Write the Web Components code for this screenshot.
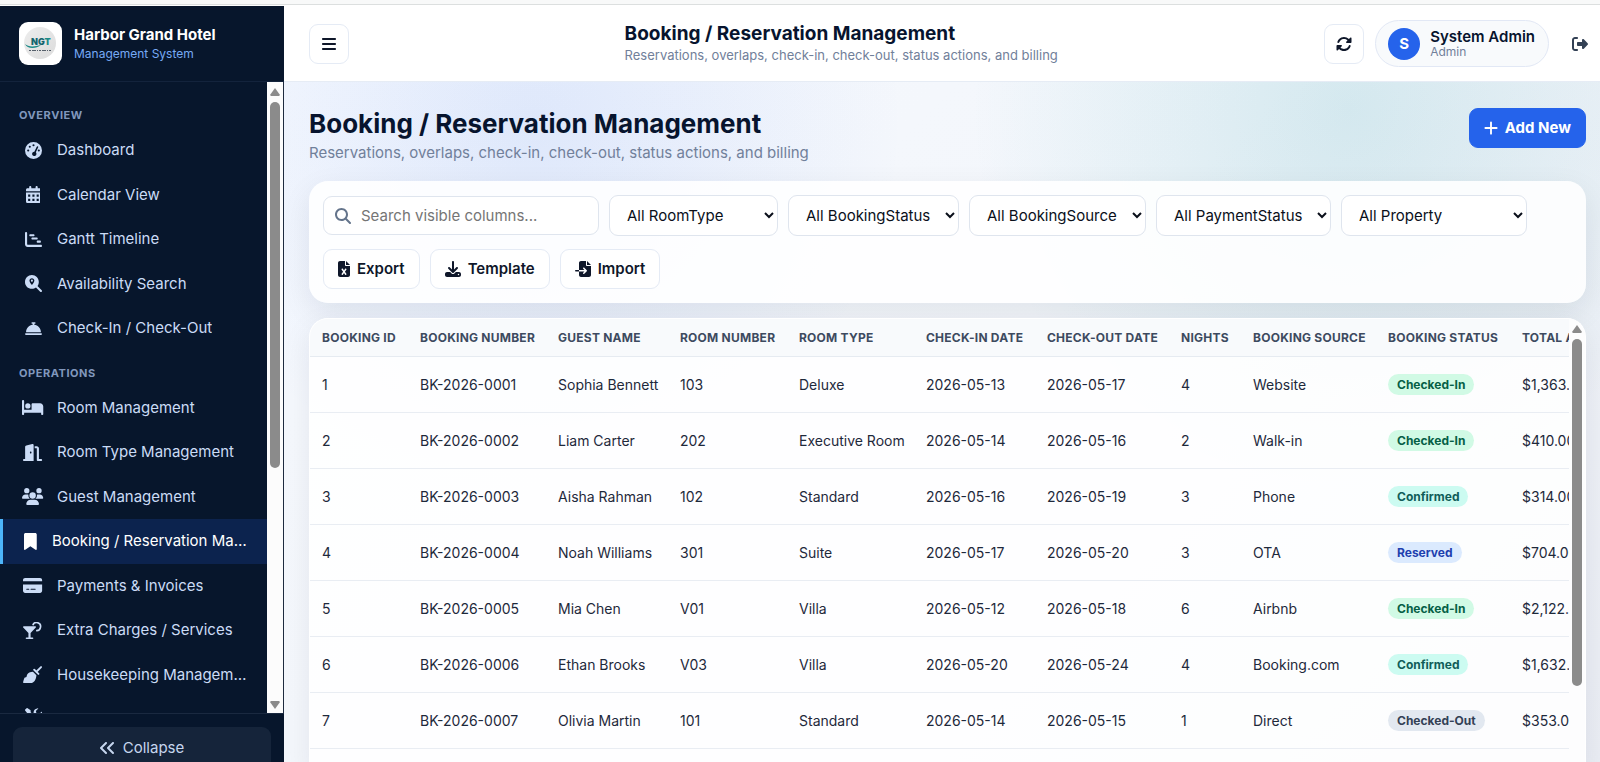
<!DOCTYPE html>
<html lang="en">
<head>
<meta charset="utf-8">
<meta name="viewport" content="width=device-width, initial-scale=1">
<title>Booking / Reservation Management</title>
<style>
  html, body { margin: 0; height: 100%; }
  body { font-family: Inter, "Liberation Sans", sans-serif; font-size: 15px; color: #07142e; overflow: hidden; }
</style>
</head>
<body>
<hotel-app></hotel-app>

<script>
const ICONS = {
  bars: ['0 0 448 512', '<path d="M0 96C0 78.3 14.3 64 32 64H416c17.7 0 32 14.3 32 32s-14.3 32-32 32H32C14.3 128 0 113.7 0 96zM0 256c0-17.7 14.3-32 32-32H416c17.7 0 32 14.3 32 32s-14.3 32-32 32H32c-17.7 0-32-14.3-32-32zM448 416c0 17.7-14.3 32-32 32H32c-17.7 0-32-14.3-32-32s14.3-32 32-32H416c17.7 0 32 14.3 32 32z"/>'],
  rotate: ['0 0 512 512', '<path d="M142.9 142.9c62.2-62.2 162.7-62.5 225.3-1L327 183c-6.9 6.9-8.9 17.2-5.2 26.2s12.5 14.8 22.2 14.8H472c13.3 0 24-10.7 24-24V72c0-9.7-5.8-18.5-14.8-22.2s-19.3-1.7-26.2 5.2L413.4 96.6c-87.6-86.5-228.7-86.2-315.8 1C73.2 122 55.6 150.7 44.8 181.4c-5.9 16.7 2.9 34.9 19.5 40.8s34.9-2.9 40.8-19.5c7.7-21.8 20.2-42.3 37.8-59.8zM16 312V440c0 9.7 5.8 18.5 14.8 22.2s19.3 1.7 26.2-5.2l41.6-41.6c87.6 86.5 228.7 86.2 315.8-1c24.4-24.4 42.1-53.1 52.9-83.7c5.9-16.7-2.9-34.9-19.5-40.8s-34.9 2.9-40.8 19.5c-7.7 21.8-20.2 42.3-37.8 59.8c-62.2 62.2-162.7 62.5-225.3 1L185 329c6.9-6.9 8.9-17.2 5.2-26.2s-12.5-14.8-22.2-14.8H40c-13.3 0-24 10.7-24 24z"/>'],
  logout: ['0 0 512 512', '<path d="M377.9 105.9L500.7 228.7c7.2 7.2 11.3 17.1 11.3 27.3s-4.1 20.1-11.3 27.3L377.9 406.1c-6.4 6.4-15 9.9-24 9.9c-18.7 0-33.9-15.2-33.9-33.9V320H192c-17.7 0-32-14.3-32-32V224c0-17.7 14.3-32 32-32H320V129.9c0-18.7 15.2-33.9 33.9-33.9c9 0 17.6 3.6 24 9.9zM160 96H96c-17.7 0-32 14.3-32 32V384c0 17.7 14.3 32 32 32h64c17.7 0 32 14.3 32 32s-14.3 32-32 32H96c-53 0-96-43-96-96V128C0 75 43 32 96 32h64c17.7 0 32 14.3 32 32s-14.3 32-32 32z"/>'],
  plus: ['0 0 448 512', '<path d="M224 76V436M44 256H404" fill="none" stroke="currentColor" stroke-width="60" stroke-linecap="round"/>'],
  search: ['0 0 512 512', '<path d="M416 208c0 45.9-14.9 88.3-40 122.7L502.6 457.4c12.5 12.5 12.5 32.8 0 45.3s-32.8 12.5-45.3 0L330.7 376c-34.4 25.2-76.8 40-122.7 40C93.1 416 0 322.9 0 208S93.1 0 208 0S416 93.1 416 208zM208 352a144 144 0 1 0 0-288 144 144 0 1 0 0 288z"/>'],
  gauge: ['0 0 512 512', '<path fill-rule="evenodd" d="M0 256a256 256 0 1 1 512 0A256 256 0 1 1 0 256zM256 128a32 32 0 1 0 0-64 32 32 0 1 0 0 64zM144 176a32 32 0 1 0 0-64 32 32 0 1 0 0 64zM96 288a32 32 0 1 0 0-64 32 32 0 1 0 0 64zM416 288a32 32 0 1 0 0-64 32 32 0 1 0 0 64zM386 127c-12-5-26 1-32 13l-72 150a66 66 0 1 0 44 20l72-150c6-12 0-27-12-33z"/>'],
  calendar: ['0 0 448 512', '<path fill-rule="evenodd" d="M128 0c17.7 0 32 14.3 32 32V64H288V32c0-17.7 14.3-32 32-32s32 14.3 32 32V64h48c26.5 0 48 21.5 48 48v48H0V112C0 85.5 21.5 64 48 64H96V32c0-17.7 14.3-32 32-32zM0 192H448V464c0 26.5-21.5 48-48 48H48c-26.500 0-48-21.500-48-48V192zM64 256v64h64v-64zM192 256v64h64v-64zM320 256v64h64v-64zM64 384v64h64v-64zM192 384v64h64v-64zM320 384v64h64v-64z"/>'],
  gantt: ['0 0 512 512', '<path d="M32 32c17.7 0 32 14.3 32 32V400c0 8.8 7.2 16 16 16H480c17.7 0 32 14.3 32 32s-14.3 32-32 32H80c-44.2 0-80-35.8-80-80V64C0 46.3 14.3 32 32 32zm96 96c0-17.7 14.3-32 32-32h96c17.7 0 32 14.3 32 32s-14.3 32-32 32H160c-17.7 0-32-14.3-32-32zm96 64H352c17.7 0 32 14.3 32 32s-14.3 32-32 32H224c-17.7 0-32-14.3-32-32s14.3-32 32-32zm160 96h64c17.7 0 32 14.3 32 32s-14.3 32-32 32H384c-17.7 0-32-14.3-32-32s14.3-32 32-32z"/>'],
  locate: ['0 0 512 512', '<path fill-rule="evenodd" d="M416 208c0 45.9-14.9 88.3-40 122.7L502.6 457.4c12.5 12.5 12.5 32.8 0 45.3s-32.8 12.5-45.3 0L330.7 376c-34.4 25.2-76.8 40-122.7 40C93.1 416 0 322.9 0 208S93.1 0 208 0S416 93.1 416 208zM208 96c-42 0-74 32-74 73 0 52 50 108 66 123 5 5 11 5 16 0 16-15 66-71 66-123 0-41-32-73-74-73zM208 138a32 32 0 1 1 0 64 32 32 0 1 1 0-64z"/>'],
  bell: ['0 0 512 512', '<path d="M216 64c-13.3 0-24 10.7-24 24s10.7 24 24 24h16v33.3C119.6 157.2 32 252.4 32 368H480c0-115.6-87.6-210.8-200-222.7V112h16c13.3 0 24-10.7 24-24s-10.7-24-24-24H216zM24 400c-13.3 0-24 10.7-24 24s10.7 24 24 24H488c13.3 0 24-10.7 24-24s-10.7-24-24-24H24z"/>'],
  bed: ['0 0 640 512', '<path d="M32 32c17.7 0 32 14.3 32 32V320H288V160c0-17.7 14.3-32 32-32H544c53 0 96 43 96 96V448c0 17.7-14.3 32-32 32s-32-14.3-32-32V416H64v32c0 17.7-14.3 32-32 32s-32-14.3-32-32V64C0 46.3 14.3 32 32 32zm144 96a80 80 0 1 1 0 160 80 80 0 1 1 0-160z"/>'],
  door: ['0 0 576 512', '<path fill-rule="evenodd" d="M320 32c0-9.9-4.5-19.2-12.3-25.2S289.8-1.4 280.2 1l-179.9 45C79 51.3 64 70.5 64 92.5V448H32c-17.7 0-32 14.3-32 32s14.3 32 32 32H320V32zM256 256c0 17.7-10.7 32-24 32s-24-14.3-24-32 10.7-32 24-32 24 14.3 24 32z"/><path d="M352 64h64c35 0 64 29 64 64V448h64c17.7 0 32 14.3 32 32s-14.3 32-32 32H448c-18 0-32-14-32-32V128H352z"/>'],
  users: ['0 0 640 512', '<circle cx="144" cy="80" r="80"/><circle cx="512" cy="80" r="80"/><circle cx="320" cy="224" r="96"/><path d="M0 298.7C0 239.8 47.8 192 106.7 192h42.7c15.9 0 31 3.5 44.6 9.7C184 257 208 296 236 320H21.3C9.6 320 0 310.4 0 298.7zM404 320c40-32 52-74 44-119 13.5-6 28-9 43-9h42.7C592.2 192 640 239.8 640 298.7c0 11.8-9.6 21.3-21.3 21.3zM128 485.3C128 411.7 187.7 352 261.3 352H378.7C452.3 352 512 411.7 512 485.3c0 14.7-11.9 26.7-26.7 26.7H154.7c-14.7 0-26.7-11.9-26.7-26.7z"/>'],
  bookmark: ['0 0 384 512', '<path d="M0 48V487.7C0 501.1 10.9 512 24.3 512c5 0 9.9-1.5 14-4.4L192 400 345.7 507.6c4.1 2.9 9 4.4 14 4.4c13.4 0 24.3-10.9 24.3-24.3V48c0-26.5-21.5-48-48-48H48C21.5 0 0 21.5 0 48z"/>'],
  card: ['0 0 576 512', '<path fill-rule="evenodd" d="M64 32C28.7 32 0 60.7 0 96v32H576V96c0-35.3-28.7-64-64-64H64zM576 224H0V416c0 35.3 28.7 64 64 64H512c35.3 0 64-28.7 64-64V224zM112 352h64c8.8 0 16 7.2 16 16s-7.2 16-16 16H112c-8.8 0-16-7.2-16-16s7.2-16 16-16zm112 16c0-8.8 7.2-16 16-16H368c8.8 0 16 7.2 16 16s-7.2 16-16 16H240c-8.8 0-16-7.2-16-16z"/>'],
  cocktail: ['0 0 576 512', '<path d="M24 128H368c22 0 32 26 17 41L228 330V464h60c14 0 24 10 24 24s-10 24-24 24H104c-14 0-24-10-24-24s10-24 24-24h60V330L7 169C-8 154 2 128 24 128z"/><path d="M296 96a120 120 0 1 1 98 160" fill="none" stroke="currentColor" stroke-width="50"/>'],
  broom: ['0 0 576 512', '<path d="M544 32 404 172M338 112 464 238" fill="none" stroke="currentColor" stroke-width="58" stroke-linecap="round"/><path d="M300 172C220 172 150 204 122 262L104 330 44 352 20 424 2 486C-2 500 8 512 22 512H232C330 512 392 420 404 276z"/>'],
  tools: ['0 0 512 512', '<path d="M78 8c-8-8-20-9-29-2L6 44c-8 8-9 19-3 28l64 84c5 6 11 9 19 9h44l92 92 40-40-92-92V81c0-8-4-15-11-19zM365 16c-70 6-119 72-104 142L20 399c-26 26-26 66 0 92s66 26 92 0l240-240c80 18 160-44 160-126 0-12-14-14-21-7l-68 68-76-20-20-76 68-68c7-7 4-15-6-14z"/>'],
  collapse: ['0 0 448 512', '<path d="M9.4 233.4c-12.5 12.5-12.5 32.8 0 45.3l160 160c12.5 12.5 32.8 12.5 45.3 0s12.5-32.8 0-45.3L77.3 256 214.6 118.6c12.5-12.5 12.5-32.8 0-45.3s-32.8-12.5-45.3 0zm384-160l-160 160c-12.5 12.5-12.5 32.8 0 45.3l160 160c12.5 12.5 32.8 12.5 45.3 0s12.5-32.8 0-45.3L301.3 256 438.6 118.6c12.5-12.5 12.5-32.8 0-45.3s-32.8-12.5-45.3 0z"/>'],
  excel: ['0 0 384 512', '<path d="M64 0C28.7 0 0 28.7 0 64V448c0 35.3 28.7 64 64 64H320c35.3 0 64-28.7 64-64V160H256c-17.7 0-32-14.3-32-32V0H64zM256 0V128H384zM155.7 250.2L192 302.1l36.3-51.9c7.6-10.9 22.6-13.5 33.4-5.9s13.5 22.6 5.9 33.4L221.3 344l46.4 66.2c7.6 10.9 5 25.8-5.9 33.4s-25.8 5-33.4-5.9L192 385.8l-36.3 51.9c-7.6 10.9-22.6 13.5-33.4 5.9s-13.5-22.6-5.9-33.4L162.7 344l-46.4-66.2c-7.6-10.9-5-25.8 5.9-33.4s25.8-5 33.4 5.9z"/>'],
  download: ['0 0 512 512', '<path d="M288 32c0-17.7-14.3-32-32-32s-32 14.3-32 32V274.7l-73.4-73.4c-12.5-12.5-32.8-12.5-45.3 0s-12.5 32.8 0 45.3l128 128c12.5 12.5 32.8 12.5 45.3 0l128-128c12.5-12.5 12.5-32.8 0-45.3s-32.8-12.5-45.3 0L288 274.7V32zM64 352c-35.3 0-64 28.7-64 64v32c0 35.3 28.7 64 64 64H448c35.3 0 64-28.7 64-64V416c0-35.3-28.7-64-64-64H346.5l-45.3 45.3c-25 25-65.5 25-90.5 0L165.5 352H64zm368 56a24 24 0 1 1 0 48 24 24 0 1 1 0-48z"/>'],
  import: ['0 0 512 512', '<path d="M128 64c0-35.3 28.7-64 64-64H352V128c0 17.7 14.3 32 32 32H512V448c0 35.3-28.7 64-64 64H192c-35.3 0-64-28.7-64-64V336H302.1l-39 39c-9.4 9.4-9.4 24.6 0 33.9s24.6 9.4 33.9 0l80-80c9.4-9.4 9.4-24.6 0-33.9l-80-80c-9.4-9.4-24.6-9.4-33.9 0s-9.4 24.6 0 33.9l39 39H128V64zm0 224v48H24c-13.3 0-24-10.7-24-24s10.7-24 24-24H128zM512 128H384V0z"/>']
};

/* Registers an element whose shadow root is filled from render(). */
function define(name, render) {
  customElements.define(name, class extends HTMLElement {
    connectedCallback() {
      if (this.shadowRoot) return;
      const tpl = document.createElement('template');
      tpl.innerHTML = '<style>*{box-sizing:border-box}</style>' + render(this);
      this.attachShadow({ mode: 'open' }).append(tpl.content.cloneNode(true));
    }
  });
}

define('ui-icon', el => {
  const [box, body] = ICONS[el.getAttribute('name')];
  return `<style>:host{display:inline-flex;flex:none;height:16px}svg{display:block;height:100%;width:auto;fill:currentColor}</style>
  <svg viewBox="${box}" aria-hidden="true">${body}</svg>`;
});

define('scroll-rail', () => `<style>
  :host{display:flex;flex-direction:column;align-items:center;flex:none;width:16px;padding:6px 0 4px;gap:6px;color:#8b8b8b}
  svg{display:block;width:10px;height:8px;flex:none;fill:currentColor}
  .thumb{width:10px;height:var(--thumb,50%);border-radius:5px;background:#8b8b8b}
  .down{display:var(--down,block);margin-top:auto}
  </style><svg viewBox="0 0 10 8"><path d="M5 0 10 7 9 8H1L0 7z"/></svg><div class="thumb"></div>
  <svg class="down" viewBox="0 0 10 8"><path d="M5 8 0 1 1 0H9L10 1z"/></svg>`);

define('ui-button', el => `<style>
  :host{display:inline-flex;flex:none}
  button{display:flex;align-items:center;justify-content:center;gap:7px;height:40px;min-width:40px;padding:0 14px;
    font:600 15px/20px Inter,"Liberation Sans",sans-serif;color:#0f172a;background:#fff;border:1px solid #e5ebf5;border-radius:9px}
  :host([variant=primary]) button{background:#2563eb;border-color:#2563eb;color:#fff;font-weight:700}
  :host([variant=ghost]) button{background:transparent;border-color:transparent;color:#334155}
  :host([square]) button{padding:0;width:40px}
  </style><button type="button"${el.hasAttribute('label') ? ` aria-label="${el.getAttribute('label')}"` : ''}>
  <ui-icon name="${el.getAttribute('icon')}"></ui-icon><slot></slot></button>`);

define('brand-logo', () => `<style>
  :host{display:block;flex:none;width:43px;height:43px;border-radius:9px;background:#fff}svg{display:block}
  text{font:900 9px Inter,sans-serif;fill:#14656f}
  </style><svg width="43" height="43" viewBox="0 0 43 43" role="img" aria-label="NGT">
  <defs><linearGradient id="g" x1="0" y1="0" x2="1" y2="1"><stop stop-color="#ededed"/><stop offset="1" stop-color="#dcdcdc"/></linearGradient></defs>
  <circle cx="21" cy="21" r="16" fill="url(#g)"/>
  <text x="12" y="23">NG<tspan fill="#1c8a87">T</tspan></text>
  <path d="M6 22c3 3 9 3 16 1-5 4-14 4-16-1z" fill="#1c8a87"/>
  <path d="M10 28.5H33" stroke="#56606b" stroke-width="1" stroke-dasharray="2 1 4 1 1 1"/></svg>`);

define('nav-item', el => `<style>
  :host{display:block}
  a{display:flex;align-items:center;gap:10px;padding:11px 16px;border-left:3px solid transparent;color:#cbdcf6;text-decoration:none;line-height:1.5}
  .icon{flex:none;width:28px;display:flex;justify-content:center}
  ui-icon{height:17px}
  .label{overflow:hidden;text-overflow:ellipsis;white-space:nowrap}
  :host([active]) a{background:#0c234e;border-left-color:#4db5f9;color:#fff}
  :host([active]) .icon{width:23px}
  </style><a href="#"${el.hasAttribute('active') ? ' aria-current="page"' : ''}>
  <span class="icon"><ui-icon name="${el.getAttribute('icon')}"></ui-icon></span><span class="label"><slot></slot></span></a>`);

define('nav-section', el => `<style>
  :host{display:block}
  h2{margin:0;padding:12px 19px 3px;font-size:11px;line-height:20px;font-weight:700;letter-spacing:.05em;text-transform:uppercase;color:#8198bd}
  </style><h2>${el.getAttribute('heading')}</h2><slot></slot>`);

define('side-bar', () => `<style>
  :host{display:flex;flex-direction:column;min-height:0;background:#07162c}
  header{display:flex;align-items:center;gap:12px;flex:none;height:76px;padding:0 19px;border-bottom:1px solid #13233c}
  .name{font-weight:700;line-height:20px;color:#fff}
  .sub{font-size:12px;line-height:18px;color:#77aaf5}
  .body{display:flex;flex:1;min-height:0;border-right:1px solid #1e2b3f}
  nav{flex:1;min-width:0;padding-top:11px;overflow:hidden}
  scroll-rail{background:#fcfcfc;--thumb:59%}
  footer{flex:none;padding:13px 13px 0;border-top:1px solid #1a2940}
  button{display:flex;align-items:center;justify-content:center;gap:9px;width:100%;height:41px;border:0;border-radius:9px 9px 0 0;
    background:#15243a;color:#c6d6ee;font:400 15px/20px Inter,"Liberation Sans",sans-serif}
  </style>
  <header><brand-logo></brand-logo><div><div class="name">Harbor Grand Hotel</div><div class="sub">Management System</div></div></header>
  <div class="body"><nav aria-label="Main">
    <nav-section heading="Overview">
      <nav-item icon="gauge">Dashboard</nav-item>
      <nav-item icon="calendar">Calendar View</nav-item>
      <nav-item icon="gantt">Gantt Timeline</nav-item>
      <nav-item icon="locate">Availability Search</nav-item>
      <nav-item icon="bell">Check-In / Check-Out</nav-item>
    </nav-section>
    <nav-section heading="Operations">
      <nav-item icon="bed">Room Management</nav-item>
      <nav-item icon="door">Room Type Management</nav-item>
      <nav-item icon="users">Guest Management</nav-item>
      <nav-item icon="bookmark" active>Booking / Reservation Management</nav-item>
      <nav-item icon="card">Payments &amp; Invoices</nav-item>
      <nav-item icon="cocktail">Extra Charges / Services</nav-item>
      <nav-item icon="broom">Housekeeping Management</nav-item>
      <nav-item icon="tools"></nav-item>
    </nav-section>
  </nav><scroll-rail></scroll-rail></div>
  <footer><button type="button"><ui-icon name="collapse"></ui-icon>Collapse</button></footer>`);

define('top-bar', () => `<style>
  :host{display:flex;align-items:center;justify-content:space-between;flex:none;height:76px;padding-left:25px;background:#fff;border-bottom:1px solid #e6ecf5}
  .title{width:424px;white-space:nowrap}
  h1{margin:0;font-size:19px;line-height:24px;font-weight:700}
  p{margin:0;font-size:13px;line-height:19px;color:#71809a}
  .actions{display:flex;align-items:center;gap:11px}
  .user{display:flex;align-items:center;gap:10px;height:47px;padding:0 13px 0 12px;border:1px solid #e2e8f5;border-radius:24px;background:#f8fafc}
  .avatar{display:grid;place-items:center;width:32px;height:32px;border-radius:50%;background:#2563eb;color:#fff;font-weight:700}
  .who{font-weight:600;line-height:17px}
  .role{font-size:12px;line-height:14px;color:#71809a}
  </style>
  <ui-button icon="bars" square label="Toggle menu"></ui-button>
  <div class="title"><h1>Booking / Reservation Management</h1><p>Reservations, overlaps, check-in, check-out, status actions, and billing</p></div>
  <div class="actions"><ui-button icon="rotate" square label="Refresh"></ui-button>
    <div class="user"><span class="avatar">S</span><div><div class="who">System Admin</div><div class="role">Admin</div></div></div>
    <ui-button icon="logout" square variant="ghost" label="Sign out"></ui-button></div>`);

define('page-heading', () => `<style>
  :host{display:flex;justify-content:space-between;align-items:flex-start}
  h2{margin:0;font-size:26px;line-height:32px;font-weight:700}
  p{margin:0;line-height:25px;color:#71809a}
  </style><div><h2>Booking / Reservation Management</h2><p>Reservations, overlaps, check-in, check-out, status actions, and billing</p></div>
  <ui-button icon="plus" variant="primary">Add New</ui-button>`);

define('filter-select', el => `<style>
  :host{display:block;width:var(--w)}
  select{display:block;width:100%;height:41px;padding:0 0 0 13px;border:1px solid #dfe5ee;border-radius:9px;background-color:#fff;color:#0a0f1a;
    font:400 15px/20px Inter,"Liberation Sans",sans-serif}
  </style><select aria-label="${el.getAttribute('field')}"><option>All ${el.getAttribute('field')}</option></select>`);

define('filter-bar', () => `<style>
  :host{display:flex;flex-wrap:wrap;align-items:center;gap:13px 10px;padding:14px;border-radius:19px;background:rgba(255,255,255,.88);box-shadow:0 10px 30px rgba(15,23,42,.08)}
  label{display:flex;align-items:center;gap:10px;width:276px;height:39px;padding:0 11px;border:1px solid #dfe5ee;border-radius:9px;background:#fff;color:#64748b}
  input{flex:1;min-width:0;padding:0;border:0;outline:0;background:none;font:400 15px/20px Inter,"Liberation Sans",sans-serif;color:#0f172a}
  input::placeholder{color:#757575}
  .buttons{display:flex;gap:10px;width:100%}
  </style>
  <label><ui-icon name="search"></ui-icon><input type="text" aria-label="Search" placeholder="Search visible columns..."></label>
  <filter-select field="RoomType" style="--w:169px"></filter-select>
  <filter-select field="BookingStatus" style="--w:171px"></filter-select>
  <filter-select field="BookingSource" style="--w:177px"></filter-select>
  <filter-select field="PaymentStatus" style="--w:175px"></filter-select>
  <filter-select field="Property" style="--w:186px"></filter-select>
  <div class="buttons"><ui-button icon="excel">Export</ui-button><ui-button icon="download">Template</ui-button><ui-button icon="import">Import</ui-button></div>`);

define('status-badge', () => `<style>
  :host{display:inline-block;padding:0 9px;border-radius:11px;font-size:12px;line-height:21px;font-weight:700;background:#e2e8f0;color:#334155}
  :host([kind="Checked-In"]){background:#d1fae5;color:#065f46}
  :host([kind="Confirmed"]){background:#ccfbf1;color:#115e59}
  :host([kind="Reserved"]){background:#dbeafe;color:#1e40af}
  </style><slot></slot>`);

const COLUMNS = [['Booking ID', 98], ['Booking Number', 138], ['Guest Name', 122], ['Room Number', 119], ['Room Type', 127],
  ['Check-In Date', 121], ['Check-Out Date', 134], ['Nights', 72], ['Booking Source', 135], ['Booking Status', 134], ['Total Amount', 134]];
const BOOKINGS = [
  ['1', 'BK-2026-0001', 'Sophia Bennett', '103', 'Deluxe', '2026-05-13', '2026-05-17', '4', 'Website', 'Checked-In', '$1,363.00'],
  ['2', 'BK-2026-0002', 'Liam Carter', '202', 'Executive Room', '2026-05-14', '2026-05-16', '2', 'Walk-in', 'Checked-In', '$410.00'],
  ['3', 'BK-2026-0003', 'Aisha Rahman', '102', 'Standard', '2026-05-16', '2026-05-19', '3', 'Phone', 'Confirmed', '$314.00'],
  ['4', 'BK-2026-0004', 'Noah Williams', '301', 'Suite', '2026-05-17', '2026-05-20', '3', 'OTA', 'Reserved', '$704.00'],
  ['5', 'BK-2026-0005', 'Mia Chen', 'V01', 'Villa', '2026-05-12', '2026-05-18', '6', 'Airbnb', 'Checked-In', '$2,122.00'],
  ['6', 'BK-2026-0006', 'Ethan Brooks', 'V03', 'Villa', '2026-05-20', '2026-05-24', '4', 'Booking.com', 'Confirmed', '$1,632.00'],
  ['7', 'BK-2026-0007', 'Olivia Martin', '101', 'Standard', '2026-05-14', '2026-05-15', '1', 'Direct', 'Checked-Out', '$353.00']
];
const TABLE_WIDTH = COLUMNS.reduce((sum, c) => sum + c[1], 0);

define('booking-table', () => `<style>
  :host{display:flex;min-height:0;border:1px solid #fff;border-bottom:0;border-radius:19px 19px 0 0;overflow:hidden;background:rgba(255,255,255,.88);box-shadow:0 10px 30px rgba(15,23,42,.08)}
  .scroll{flex:1;min-width:0;overflow:hidden}
  table{width:${TABLE_WIDTH}px;table-layout:fixed;border-collapse:separate;border-spacing:0}
  th,td{padding:0 0 0 12px;text-align:left;white-space:nowrap}
  th{height:38px;font-size:12px;line-height:16px;font-weight:700;letter-spacing:.02em;text-transform:uppercase;color:#3d4a5f;background:#f8fafc;border-bottom:1px solid #e6ebf1}
  td{height:56px;font-size:14px;line-height:20px;color:#1e293b;border-bottom:1px solid #e9edf3}
  scroll-rail{--thumb:79%;--down:none}
  </style><div class="scroll"><table>
  <colgroup>${COLUMNS.map(c => `<col style="width:${c[1]}px">`).join('')}</colgroup>
  <thead><tr>${COLUMNS.map(c => `<th scope="col">${c[0]}</th>`).join('')}</tr></thead>
  <tbody>${BOOKINGS.map(r => `<tr>${r.map((v, i) => `<td>${i === 9 ? `<status-badge kind="${v}">${v}</status-badge>` : v}</td>`).join('')}</tr>`).join('')}</tbody>
  </table></div><scroll-rail></scroll-rail>`);

define('hotel-app', () => `<style>
  :host{display:grid;grid-template:6px 100vh / 284px minmax(0,1fr);height:100vh;overflow:hidden}
  .strip{grid-column:1 / -1;background:linear-gradient(#f8f9f9 4px,#dcdfdf 4px 5px,#fff 5px)}
  .main{display:flex;flex-direction:column;min-height:0}
  main{display:flex;flex-direction:column;flex:1;min-height:0;padding:26px 14px 0 25px;
    background:radial-gradient(circle at 19% 6%,rgba(37,99,235,.11),transparent 370px),
      radial-gradient(circle at 81% 4%,rgba(8,145,160,.13),transparent 380px),
      linear-gradient(135deg,#f6f9fe,#f3f6fb 50%,#eaedf4)}
  filter-bar{margin-top:16px}
  booking-table{flex:1;margin-top:15px}
  </style>
  <div class="strip"></div>
  <side-bar></side-bar>
  <div class="main"><top-bar></top-bar><main>
    <page-heading></page-heading><filter-bar></filter-bar><booking-table></booking-table>
  </main></div>`);
</script>
</body>
</html>
